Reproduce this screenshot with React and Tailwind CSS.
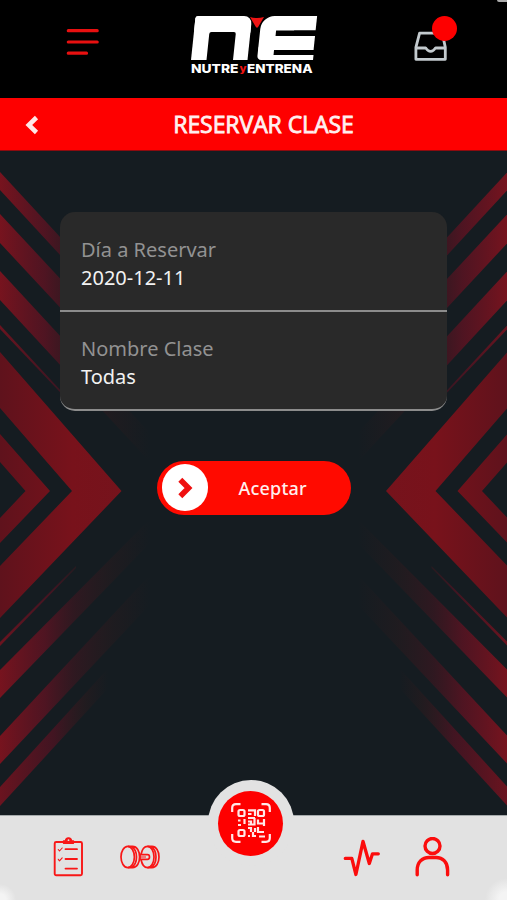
const SANS = "font-['Noto_Sans','Open_Sans',sans-serif]";

function MenuIcon() {
  return (
    <svg className="block h-[30px] w-[36px]" viewBox="0 0 36 30" fill="none" stroke="#e81010" strokeWidth="3.2" strokeLinecap="round">
      <path d="M3.300 3.700H32.200M3.300 15H32.200M3.300 26.200H21.500" />
    </svg>
  );
}

function InboxIcon() {
  return (
    <svg className="block h-[30px] w-[34px]" viewBox="0 0 34 30" fill="none" stroke="#c3cace" strokeWidth="2.8" strokeLinejoin="round">
      <path d="M5.600 2.200H28.300L31.300 16.400V28.300H1.900V16.400Z" />
      <path d="M2 17H11.600C12.600 17 12.600 20.300 16.600 20.300S20.600 17 21.600 17H31.300" />
    </svg>
  );
}

function Logo() {
  return (
    <svg className="block h-[62px] w-[130px]" viewBox="188 14 130 62">
      <g transform="translate(6.310 0) skewX(-6)">
        <g fill="#fff">
          <rect x="191" y="16" width="30" height="16" rx="2" />
          <rect x="205" y="16" width="42.500" height="24" rx="8" />
          <rect x="191" y="18" width="17" height="42" />
          <rect x="232" y="26" width="15.500" height="34" />
          <rect x="206.500" y="32" width="26.500" height="31" rx="2" fill="#000" />
          <rect x="257" y="16" width="34" height="44" rx="13" />
          <rect x="272" y="16" width="40.500" height="14.500" />
          <rect x="273" y="30.500" width="40" height="5.500" fill="#000" />
          <rect x="273" y="36" width="39.500" height="14" />
          <rect x="273" y="50" width="40" height="5" fill="#000" />
          <rect x="266" y="55" width="47" height="5" />
          <rect x="257" y="45" width="14" height="15" rx="4" />
        </g>
      </g>
      <path d="M250 17Q257 19 264 17L257.800 27.500H256.200Z" fill="#ef1414" />
      <g fontFamily="Inter, sans-serif" fontWeight="800" fontSize="12">
        <text x="191" y="73" fill="#fff" textLength="47.500" lengthAdjust="spacingAndGlyphs">NUTRE</text>
        <text x="239.500" y="72" fill="#ef1414" fontSize="10" textLength="7" lengthAdjust="spacingAndGlyphs">y</text>
        <text x="247" y="73" fill="#fff" textLength="65.500" lengthAdjust="spacingAndGlyphs">ENTRENA</text>
      </g>
    </svg>
  );
}

function ChevronArt() {
  return (
    <g>
      <g fill="url(#stripe)">
        <path d="M0 172L110 291V309L0 190Z" />
        <path d="M0 214L150 375V404L0 243Z" />
        <path d="M0 271L150 433V462L0 300Z" />
        <path d="M0 670L150 519V543L0 698Z" />
        <path d="M0 736L160 564V594L0 764Z" />
      </g>
      <g fill="url(#stripeShort)">
        <path d="M0 325L76 407V409L0 329Z" />
        <path d="M0 642L76 566V568L0 646Z" />
        <path d="M0 787L112 664V684L0 806Z" />
      </g>
      <path d="M0 352L121.500 491L0 618V566L72 491L0 408Z" fill="url(#solid)" />
      <path d="M0 434L50 491L0 543V518L25.500 491L0 462Z" fill="url(#solid)" />
    </g>
  );
}

function Backdrop() {
  return (
    <svg className="absolute inset-0 h-full w-full" viewBox="0 151 507 664" preserveAspectRatio="none">
      <defs>
        <linearGradient id="stripe" gradientUnits="userSpaceOnUse" x1="0" y1="0" x2="150" y2="0">
          <stop offset="0" stopColor="#7c131e" stopOpacity="0.95" />
          <stop offset="0.3" stopColor="#621222" stopOpacity="0.75" />
          <stop offset="0.5" stopColor="#481520" stopOpacity="0.5" />
          <stop offset="0.75" stopColor="#3a1a1c" stopOpacity="0.25" />
          <stop offset="1" stopColor="#3a1a1c" stopOpacity="0" />
        </linearGradient>
        <linearGradient id="stripeShort" gradientUnits="userSpaceOnUse" x1="0" y1="0" x2="108" y2="0">
          <stop offset="0" stopColor="#6f131f" stopOpacity="0.95" />
          <stop offset="0.5" stopColor="#541222" stopOpacity="0.7" />
          <stop offset="0.8" stopColor="#3a1a1c" stopOpacity="0.3" />
          <stop offset="1" stopColor="#3a1a1c" stopOpacity="0" />
        </linearGradient>
        <linearGradient id="solid" gradientUnits="userSpaceOnUse" x1="0" y1="0" x2="121" y2="0">
          <stop offset="0" stopColor="#5f121c" />
          <stop offset="0.6" stopColor="#78121b" />
          <stop offset="1" stopColor="#76131c" />
        </linearGradient>
      </defs>
      <ChevronArt />
      <g transform="translate(507.500 0) scale(-1 1)">
        <ChevronArt />
      </g>
    </svg>
  );
}

function Field({ label, value }) {
  return (
    <div className="flex h-[99px] flex-col border-b-2 border-[#8c8c8c] bg-[#292929] pt-[23px] pl-[21px] text-[20px] leading-[28px] first:h-[100px] first:rounded-t-[15px] first:pt-[24px] last:rounded-b-[15px]">
      <span className="text-[#929292]">{label}</span>
      <span className="text-[#f2f2f2]">{value}</span>
    </div>
  );
}

function QrIcon() {
  return (
    <svg className="block h-[40px] w-[40px]" viewBox="0 0 40 40" fill="none" stroke="#ffe9e9" strokeWidth="2.200">
      <path d="M1.200 9V5Q1.200 1.200 5 1.200H9.500M30.500 1.200H35Q38.800 1.200 38.800 5V9M1.200 31V35Q1.200 38.800 5 38.800H9.500M30.500 38.800H35Q38.800 38.800 38.800 35V31" />
      <rect x="7.500" y="7" width="6" height="6" rx="1.500" />
      <rect x="27" y="7" width="6" height="6" rx="1.500" />
      <rect x="7.500" y="27" width="6" height="6" rx="1.500" />
      <path d="M17 7.300H24V13M17 11H20.500M17 15H24M7 17.500H9.500M13.500 16V21M7 22H10M17 18.500H20V21M23.500 15V21.500H17M27 16.500V20.500H33M33 16V23M27 24V29H33M17 25H20V29M24 25V29M17 33H19M22 29V33H25M28 33.500H34" />
    </svg>
  );
}

function ClipboardIcon() {
  return (
    <svg className="block h-[40px] w-[30px]" viewBox="0 0 30 40" fill="none" stroke="#f81717" strokeLinecap="round" strokeLinejoin="round">
      <rect x="1.700" y="5" width="27.300" height="33.200" rx="1.500" strokeWidth="1.900" />
      <path d="M10.500 6.300V3.800H12.500A3 3 0 0 1 18.500 3.800H20.500V6.300Z" fill="#f81717" strokeWidth="1.200" />
      <circle cx="15.500" cy="3.200" r="0.900" fill="#e2e2e2" stroke="none" />
      <path d="M12.500 12.200H24M12.500 22H24M12.500 31.600H24" strokeWidth="1.800" />
      <path d="M5.300 12.500L6.500 14L9.200 11M5.300 22.300L6.500 23.800L9.200 20.800" strokeWidth="1.100" />
    </svg>
  );
}

function DumbbellIcon() {
  return (
    <svg className="block h-[24px] w-[40px]" viewBox="0 0 40 24" fill="none" stroke="#f81717" strokeWidth="1.700">
      <ellipse cx="7.700" cy="12" rx="6.700" ry="10.600" />
      <path d="M8 1.400H12.500C17 1.400 19.600 6 19.600 12S17 22.600 12.500 22.600H8M11.500 1.600C15.500 4 16.500 8 16.500 12S15.500 20 11.500 22.400" />
      <path d="M21 9.500C22 4.500 24.500 1.400 27.500 1.400C31.200 1.400 34 6 34 12S31.200 22.600 27.500 22.600C24.500 22.600 22 19.500 21 14.500" />
      <path d="M27.500 1.400H32C36.200 1.400 39 6 39 12S36.200 22.600 32 22.600H27.500M31 1.600C35 4 36 8 36 12S35 20 31 22.400" />
      <path d="M20 9.700H27.500A2 2.300 0 0 1 27.500 14.300H20Z" />
      <path d="M20 12H26" strokeWidth="1" />
    </svg>
  );
}

function PulseIcon() {
  return (
    <svg className="block h-[38px] w-[38px]" viewBox="0 0 38 38" fill="none" stroke="#fb0d0d" strokeWidth="3.300" strokeLinecap="round" strokeLinejoin="round">
      <path d="M2.300 19.400H8.800L12.900 35.500L20 2.300L26.300 24.500L29.500 14.800H35.300" />
    </svg>
  );
}

function PersonIcon() {
  return (
    <svg className="block h-[40px] w-[36px]" viewBox="0 0 36 40" fill="none" stroke="#fb0d0d" strokeWidth="3.400" strokeLinecap="round">
      <circle cx="17.500" cy="9" r="7.500" />
      <path d="M2.200 37.700V33C2.200 25.500 7 20.500 14 20.500H21C28 20.500 32.600 25.500 32.600 33V37.700" />
    </svg>
  );
}

export default function App() {
  return (
    <div className={`flex h-[900px] w-[507px] flex-col overflow-hidden bg-[#151c21] ${SANS}`}>
      <header className="relative flex h-[98px] shrink-0 items-start bg-black">
        <div className="mt-[27px] ml-[65px]"><MenuIcon /></div>
        <div className="mt-[14px] ml-[87px]"><Logo /></div>
        <div className="relative mt-[31px] ml-[96px]">
          <InboxIcon />
          <span className="absolute top-[-15px] left-[18px] h-[25px] w-[25px] rounded-full bg-[#fe0000]" />
        </div>
        <span className="absolute top-0 right-0 h-[2px] w-[10px] rounded-bl-sm bg-[#aaa]" />
      </header>

      <div className="grid h-[53px] shrink-0 grid-cols-[64px_1fr_44px] items-center border-b border-[#8d0b0f] bg-[#fe0000]">
        <svg className="mt-px ml-[25px] block h-[20px] w-[14px]" viewBox="0 0 14 20" fill="none" stroke="#ffe6e6" strokeWidth="4.600">
          <path d="M11.500 2.500L3.800 10L11.500 17.500" />
        </svg>
        <h1 className="whitespace-nowrap pt-px text-center font-['Open_Sans',sans-serif] text-[23px] tracking-[-0.070px] text-[#fff0f0] [-webkit-text-stroke:0.800px_#fff0f0]">RESERVAR CLASE</h1>
      </div>

      <main className="relative flex-1">
        <Backdrop />
        <div className="relative flex flex-col items-center pt-[61px]">
          <div className="flex w-[387px] flex-col">
            <Field label="Día a Reservar" value="2020-12-11" />
            <Field label="Nombre Clase" value="Todas" />
          </div>
          <button className="mt-[49.500px] flex h-[54px] w-[194px] items-center rounded-full bg-[#ff0a00] pl-[5px]">
            <span className="flex h-[47px] w-[46px] items-center justify-center rounded-full bg-white">
              <svg className="block h-[22px] w-[16px]" viewBox="0 0 16 22" fill="none" stroke="#ef1010" strokeWidth="5.600">
                <path d="M3.300 2.800L11.500 11L3.300 19.200" />
              </svg>
            </span>
            <span className="ml-[31px] pt-px text-[18px] font-medium tracking-[0.200px] text-[#fff0ee]">Aceptar</span>
          </button>
        </div>
      </main>

      <footer className="relative flex h-[85px] shrink-0 items-start border-t border-[#a5aaab] bg-[#e2e2e2] bg-[radial-gradient(circle_at_0_100%,#f4f4f4_6px,transparent_16px),radial-gradient(circle_at_100%_100%,#f4f4f4_8px,transparent_22px)]">
        <div className="mt-[21px] ml-[53px]"><ClipboardIcon /></div>
        <div className="mt-[28.500px] ml-[37px]"><DumbbellIcon /></div>
        <div className="mt-[23px] ml-[183px]"><PulseIcon /></div>
        <div className="mt-[20.500px] ml-[34px]"><PersonIcon /></div>
        <div className="absolute top-[-36px] left-[207.500px] flex h-[86px] w-[86px] items-center justify-center rounded-full bg-[#e2e2e2]">
          <div className="flex h-[65px] w-[65px] items-center justify-center rounded-full bg-[#fe0000]">
            <QrIcon />
          </div>
        </div>
      </footer>
    </div>
  );
}
